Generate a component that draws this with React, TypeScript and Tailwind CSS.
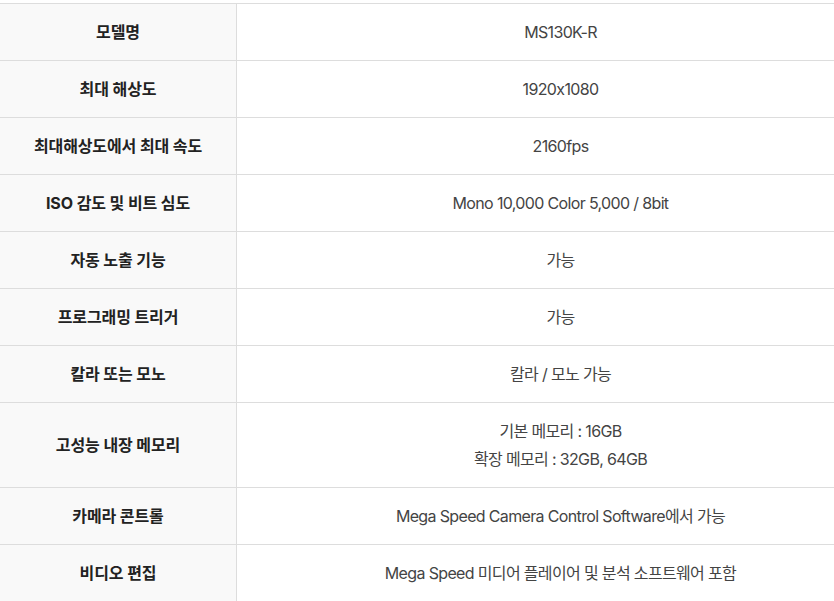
import * as React from 'react';

const rows: { label: string; value: string[] }[] = [
  { label: '모델명', value: ['MS130K-R'] },
  { label: '최대 해상도', value: ['1920x1080'] },
  { label: '최대해상도에서 최대 속도', value: ['2160fps'] },
  { label: 'ISO 감도 및 비트 심도', value: ['Mono 10,000 Color 5,000 / 8bit'] },
  { label: '자동 노출 기능', value: ['가능'] },
  { label: '프로그래밍 트리거', value: ['가능'] },
  { label: '칼라 또는 모노', value: ['칼라 / 모노 가능'] },
  { label: '고성능 내장 메모리', value: ['기본 메모리 : 16GB', '확장 메모리 : 32GB, 64GB'] },
  { label: '카메라 콘트롤', value: ['Mega Speed Camera Control Software에서 가능'] },
  { label: '비디오 편집', value: ['Mega Speed 미디어 플레이어 및 분석 소프트웨어 포함'] },
];

export default function App() {
  return (
    <div
      className="w-full h-[601px] overflow-hidden bg-white pt-[3px]"
      style={{ fontFamily: '"Inter", "Noto Sans CJK KR", sans-serif' }}
    >
      <div className="w-[884px] border-t border-[#dddddd] text-[16px] leading-[28px]">
        {rows.map((row, i) => (
          <div key={i} className="flex border-b border-[#dddddd]">
            <div className="w-[237px] shrink-0 flex items-center justify-center bg-[#f9f9f9] border-r border-[#dddddd] py-[14px] font-bold text-[#222222] tracking-[-0.1px]">
              {row.label}
            </div>
            <div className="flex-1 flex flex-col items-center justify-center py-[14px] text-[#444444] tracking-[-0.65px]">
              {row.value.map((v, j) => (
                <div key={j}>{v}</div>
              ))}
            </div>
          </div>
        ))}
      </div>
    </div>
  );
}
